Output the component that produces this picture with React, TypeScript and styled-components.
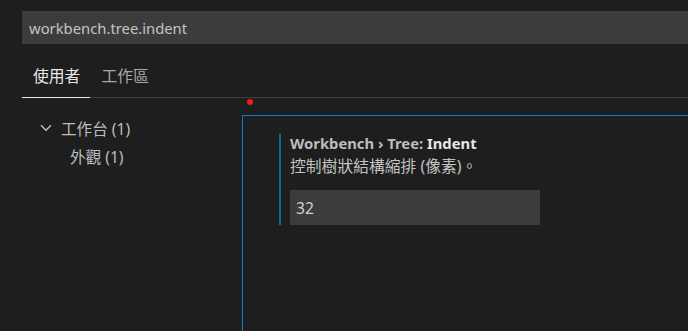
import React from "react";
import styled, { createGlobalStyle } from "styled-components";

const Global = createGlobalStyle`
  html, body { margin: 0; padding: 0; background: #1e1e1e; overflow: hidden; }
  body { font-family: "Noto Sans", "Noto Sans CJK TC", sans-serif; }
  #root { width: 688px; height: 331px; }
`;

const Page = styled.div`
  position: relative;
  width: 688px;
  height: 331px;
  background: #1e1e1e;
  overflow: hidden;
  display: flex;
  flex-direction: column;
`;

const SearchRow = styled.div`
  padding: 11px 0 0 22px;
`;

const SearchBox = styled.div`
  height: 33px;
  background: #3c3c3c;
  display: flex;
  align-items: center;
  padding-left: 7px;
  color: #c4c4c4;
  font-size: 14.8px;
`;

const TabBar = styled.div`
  margin: 19px 0 0 22px;
  display: flex;
  border-bottom: 1px solid #3b3b3b;
`;

const Tab = styled.div<{ $active?: boolean }>`
  padding: 0 10px 7px 11px;
  font-size: 15.8px;
  line-height: 27px;
  color: ${(p) => (p.$active ? "#e7e7e7" : "#a8a8a8")};
  margin-bottom: -1px;
  border-bottom: 1px solid ${(p) => (p.$active ? "#e7e7e7" : "transparent")};
`;

const Body = styled.div`
  flex: 1;
  display: flex;
  position: relative;
`;

const Tree = styled.div`
  width: 220px;
  margin-left: 22px;
  padding-top: 16px;
  display: flex;
  flex-direction: column;
`;

const TreeRow = styled.div<{ $indent: number }>`
  height: 28px;
  display: flex;
  align-items: center;
  padding-left: ${(p) => p.$indent}px;
  font-size: 15.6px;
  color: #bdbdbd;
  gap: 9px;
`;

const Chevron = styled.svg`
  width: 12px;
  height: 8px;
  flex: none;
`;

const Dot = styled.div`
  position: absolute;
  left: 247px;
  top: 1px;
  width: 6px;
  height: 6px;
  border-radius: 50%;
  background: #f01b1b;
`;

const Editor = styled.div`
  flex: 1;
  margin-top: 17px;
  border-top: 1px solid #007fd4;
  border-left: 1px solid #007fd4;
  padding: 18px 0 0 36px;
`;

const SettingItem = styled.div`
  border-left: 2px solid #0b6a9c;
  padding-left: 9px;
  display: flex;
  flex-direction: column;
  width: 259px;
`;

const Title = styled.div`
  font-size: 14.8px;
  font-weight: 700;
  line-height: 20px;
  color: #bdbdbd;
  margin-top: -1px;
  white-space: nowrap;
`;

const Label = styled.span`
  color: #e6e6e6;
`;

const Desc = styled.div`
  font-size: 15.8px;
  line-height: 24px;
  color: #c2c2c2;
  margin-top: 1px;
  white-space: nowrap;
`;

const Input = styled.div`
  margin-top: 12px;
  height: 35px;
  width: 250px;
  background: #3c3c3c;
  display: flex;
  align-items: center;
  padding-left: 6px;
  box-sizing: border-box;
  color: #d0d0d0;
  font-size: 15.6px;
`;

export default function App() {
  return (
    <Page>
      <Global />
      <SearchRow>
        <SearchBox>workbench.tree.indent</SearchBox>
      </SearchRow>
      <TabBar>
        <Tab $active>使用者</Tab>
        <Tab>工作區</Tab>
      </TabBar>
      <Body>
        <Dot />
        <Tree>
          <TreeRow $indent={18}>
            <Chevron viewBox="0 0 12 8">
              <path d="M1 1.2 L6 6.2 L11 1.2" fill="none" stroke="#c5c5c5" strokeWidth="1.4" />
            </Chevron>
            <span>工作台 (1)</span>
          </TreeRow>
          <TreeRow $indent={48}>
            <span>外觀 (1)</span>
          </TreeRow>
        </Tree>
        <Editor>
          <SettingItem>
            <Title>
              Workbench › Tree: <Label>Indent</Label>
            </Title>
            <Desc>控制樹狀結構縮排 (像素)。</Desc>
            <Input>32</Input>
          </SettingItem>
        </Editor>
      </Body>
    </Page>
  );
}
